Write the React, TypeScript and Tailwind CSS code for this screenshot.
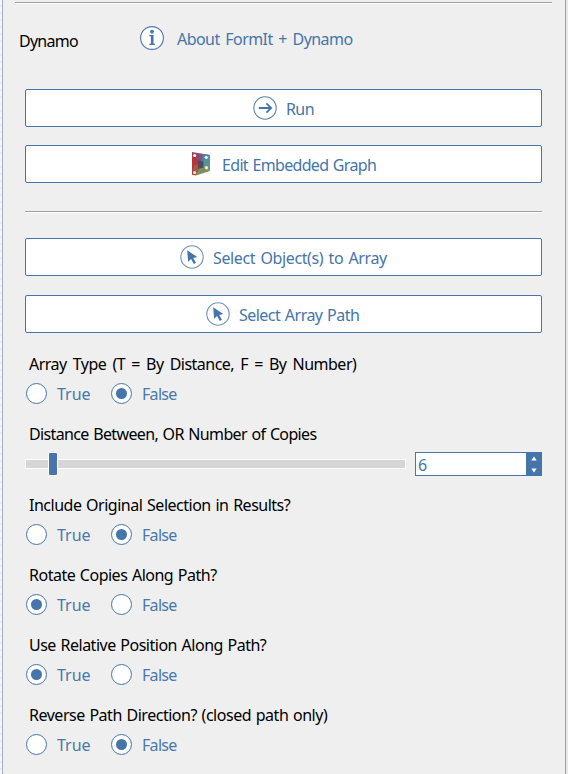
import React, { useState } from "react";

function InfoIcon() {
  return (
    <svg width="24" height="24" viewBox="0 0 24 24" className="shrink-0">
      <circle cx="12" cy="12" r="11.4" fill="#fff" stroke="#4a78ac" strokeWidth="1.1" />
      <circle cx="12" cy="5.7" r="1.9" fill="#4575aa" />
      <path d="M9.3 9h4.2v8.8h1.5V19H9.3v-1.2h1.6v-7.6H9.3z" fill="#4575aa" />
    </svg>
  );
}

function RunIcon() {
  return (
    <svg width="24" height="24" viewBox="0 0 24 24" fill="none" className="shrink-0">
      <circle cx="12" cy="12" r="11.2" stroke="#5581b2" strokeWidth="1.1" />
      <path d="M5.8 12h12" stroke="#4575aa" strokeWidth="2" />
      <path d="M13.4 7.4 18.2 12l-4.8 4.6" stroke="#4575aa" strokeWidth="1.8" />
    </svg>
  );
}

function PickIcon() {
  return (
    <svg width="24" height="24" viewBox="0 0 24 24" className="shrink-0">
      <circle cx="12" cy="12" r="11.2" fill="none" stroke="#6d91bb" strokeWidth="1.1" />
      <path d="M7.2 5.2 17.3 12.1l-4.1.9 2.8 4.8-2.2 1.1-2.7-4.9-3 2.7z" fill="#4575aa" />
    </svg>
  );
}

function GraphIcon() {
  return (
    <svg width="20" height="24" viewBox="0 0 20 24" className="shrink-0">
      <path d="M1.5 0.5 10 12 1.5 23z" fill="#b5333c" stroke="#b5333c" strokeLinejoin="round" />
      <path d="M1 0 19 3 10 12z" fill="#8c4c71" />
      <path d="M19 3v16l-9-7z" fill="#55958f" />
      <path d="M11 2 19 3 10 12z" fill="#4c7fa8" />
      <path d="M1 23 10 12l9 7-14 4.5z" fill="#7f8f58" />
      <path d="M1 23 3 13l7-1-5 11z" fill="#a35a44" />
      <path d="M7 8.5 12.5 9.5v6L7 17z" fill="#574660" />
      <circle cx="3.6" cy="3.5" r="1.6" fill="#fff" />
      <circle cx="15.2" cy="5.3" r="1.6" fill="#e5f8ff" />
      <circle cx="15.5" cy="15.8" r="1.7" fill="#f0ead0" />
      <circle cx="3.6" cy="20.5" r="1.6" fill="#f7d9cd" />
    </svg>
  );
}

function ActionButton({ icon, children, className }: { icon: React.ReactNode; children: React.ReactNode; className: string }) {
  return (
    <button className={`flex h-[38px] w-[517px] items-center rounded-[2px] border border-[#4575aa] bg-white text-[#4575aa] ${className}`}>
      {icon}
      <span className="pt-[2px]">{children}</span>
    </button>
  );
}

function Radio({ label, checked, onSelect, className }: { label: string; checked: boolean; onSelect: () => void; className: string }) {
  return (
    <button role="radio" aria-checked={checked} onClick={onSelect} className={`flex h-[21px] items-center text-[#4a78ac] ${className}`}>
      <span className="mr-[10px] flex size-[21px] shrink-0 items-center justify-center rounded-full border border-[#4575aa] bg-white">
        {checked && <span className="size-[11px] rounded-full bg-[#4575aa]" />}
      </span>
      <span>{label}</span>
    </button>
  );
}

function BooleanField({ label, initial, className }: { label: string; initial: boolean; className: string }) {
  const [value, setValue] = useState(initial);
  return (
    <div className="h-[70px]">
      <div className={`ml-[26px] h-[20px] ${className}`}>{label}</div>
      <div role="radiogroup" className="mt-[9px] ml-[23px] flex">
        <Radio label="True" checked={value} onSelect={() => setValue(true)} className="w-[85px]" />
        <Radio label="False" checked={!value} onSelect={() => setValue(false)} className="w-[90px] tracking-[-0.7px]" />
      </div>
    </div>
  );
}

export default function App() {
  return (
    <div className="flex h-[774px] w-[568px] overflow-hidden bg-[#efefef] font-['Noto_Sans',sans-serif] text-[16px] leading-[20px] whitespace-nowrap text-black">
      <div className="w-[2px] shrink-0 bg-[repeating-linear-gradient(180deg,#f7f7f7_0px,#f7f7f7_5px,#e2e2e2_6px,#f7f7f7_7px)]" />
      <main className="w-[564px] shrink-0 border-r border-l border-r-[#a0a0a0] border-l-[#a3adc4]">
        <div className="mt-[2px] ml-[12px] h-[2px] w-[537px] border-t border-b border-t-[#a0a0a0] border-b-white" />
        <header className="flex h-[85px] pt-[22px]">
          <h1 className="ml-[16px] w-[121px] pt-[5px] tracking-[-0.75px]">Dynamo</h1>
          <a className="flex h-6 items-center text-[#4575aa]">
            <InfoIcon />
            <span className="ml-[13px] pt-[2px] tracking-[-0.55px] [word-spacing:2px]">About FormIt + Dynamo</span>
          </a>
        </header>
        <div className="ml-[22px]">
          <ActionButton icon={<RunIcon />} className="gap-[9px] pl-[227px] tracking-[-0.6px]">Run</ActionButton>
          <ActionButton icon={<GraphIcon />} className="mt-[18px] gap-[11px] pl-[165px] tracking-[-0.67px] [word-spacing:1px]">Edit Embedded Graph</ActionButton>
          <div className="mt-[28px] h-[2px] w-[517px] border-t border-b border-t-[#a0a0a0] border-b-white" />
          <ActionButton icon={<PickIcon />} className="mt-[25px] gap-[9px] pl-[154px] tracking-[-0.38px] [word-spacing:1.5px]">Select Object(s) to Array</ActionButton>
          <ActionButton icon={<PickIcon />} className="mt-[19px] gap-[9px] pl-[180px] tracking-[-0.53px] [word-spacing:1px]">Select Array Path</ActionButton>
        </div>
        <div className="mt-[21px]">
          <BooleanField label="Array Type (T = By Distance, F = By Number)" initial={false} className="tracking-[-0.52px] [word-spacing:2.5px]" />
          <div className="h-[71px]">
            <div className="ml-[26px] h-[20px] tracking-[-0.64px] [word-spacing:1px]">Distance Between, OR Number of Copies</div>
            <div className="mt-[8px] ml-[22px] flex h-6 items-center">
              <div className="flex h-[10px] w-[381px] items-center border border-white bg-[#d6d6d6]">
                <div className="ml-[22px] h-[24px] w-[10px] rounded-[2px] border border-white bg-[#4575aa]" />
              </div>
              <div className="ml-[9px] flex h-6 w-[127px] border border-[#4575aa] bg-white text-[#4575aa]">
                <div className="w-[110px] pt-[2px] pl-[2px]">6</div>
                <svg width="15" height="22" viewBox="0 0 15 22" className="bg-[#4575aa]">
                  <path d="M5.3 7.5 8 3.5l2.7 4zM5.3 15.5h5.4l-2.7 4z" fill="#fff" />
                </svg>
              </div>
            </div>
          </div>
          <BooleanField label="Include Original Selection in Results?" initial={false} className="tracking-[-0.49px] [word-spacing:1px]" />
          <BooleanField label="Rotate Copies Along Path?" initial={true} className="tracking-[-0.5px] [word-spacing:1px]" />
          <BooleanField label="Use Relative Position Along Path?" initial={true} className="tracking-[-0.5px] [word-spacing:1px]" />
          <BooleanField label="Reverse Path Direction? (closed path only)" initial={false} className="tracking-[-0.48px] [word-spacing:1px]" />
        </div>
      </main>
      <div className="w-[2px] shrink-0 bg-[#e8e8e8]" />
    </div>
  );
}
